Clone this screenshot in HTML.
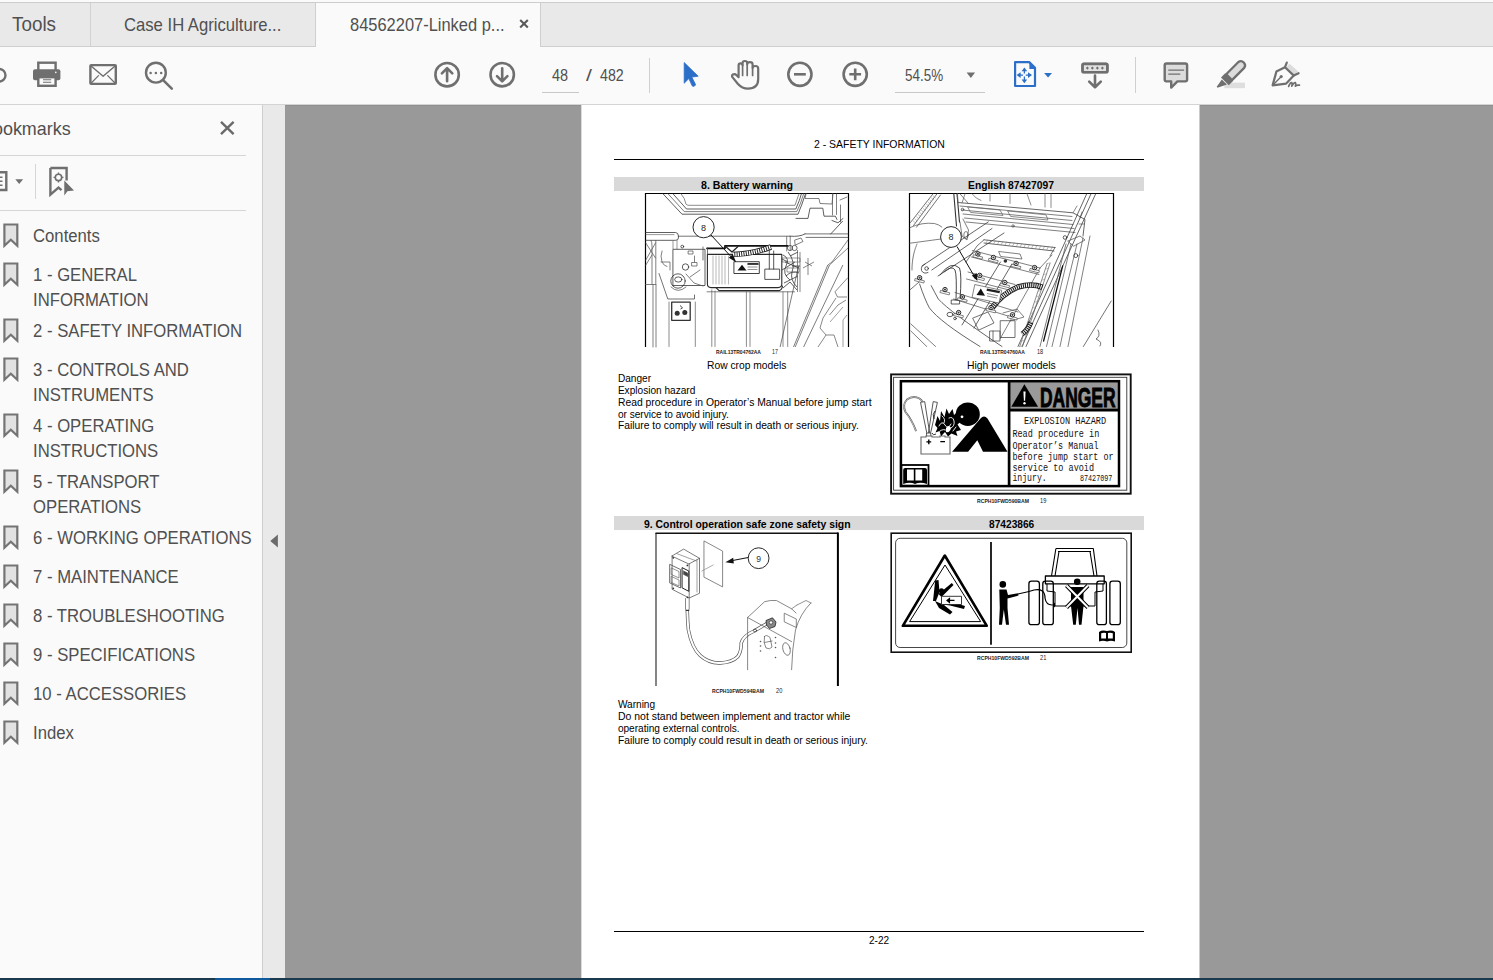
<!DOCTYPE html>
<html><head><meta charset="utf-8">
<style>
*{margin:0;padding:0;box-sizing:border-box}
html,body{width:1493px;height:980px;overflow:hidden}
body{position:relative;background:#999999;font-family:"Liberation Sans",sans-serif}
.a{position:absolute}
.t{position:absolute;white-space:nowrap;line-height:1;font-family:"Liberation Sans",sans-serif}
svg.s{position:absolute;left:0;top:0;overflow:visible}
</style></head><body>
<div class="a" style="left:0px;top:0px;width:1493px;height:2px;background:#fafafa;"></div>
<div class="a" style="left:0px;top:2px;width:1493px;height:1px;background:#cdcdcd;"></div>
<div class="a" style="left:0px;top:3px;width:1493px;height:43px;background:#e9e9e9;"></div>
<div class="a" style="left:0px;top:46px;width:1493px;height:1px;background:#cfcfcf;"></div>
<div class="a" style="left:90px;top:3px;width:1px;height:43px;background:#d2d2d2;"></div>
<div class="a" style="left:315px;top:3px;width:1px;height:44px;background:#cfcfcf;"></div>
<div class="a" style="left:316px;top:3px;width:224px;height:44px;background:#fafafa;"></div>
<div class="a" style="left:540px;top:3px;width:1px;height:44px;background:#cfcfcf;"></div>
<div class="a" style="left:0px;top:47px;width:1493px;height:57px;background:#fafafa;"></div>
<div class="a" style="left:0px;top:104px;width:1493px;height:1px;background:#d4d4d4;"></div>
<div class="a" style="left:0px;top:105px;width:262px;height:873px;background:#fafafa;"></div>
<div class="a" style="left:262px;top:105px;width:1px;height:873px;background:#cfcfcf;"></div>
<div class="a" style="left:263px;top:105px;width:22px;height:873px;background:#e9e9e9;"></div>
<div class="a" style="left:285px;top:105px;width:1208px;height:1px;background:#909090;"></div>
<div class="a" style="left:581px;top:105px;width:1px;height:873px;background:#dcdcdc;"></div>
<div class="a" style="left:582px;top:105px;width:617px;height:873px;background:#ffffff;"></div>
<div class="a" style="left:1199px;top:105px;width:1px;height:873px;background:#cbcbcb;"></div>
<div class="a" style="left:0px;top:978px;width:1493px;height:2px;background:#1b3a4e;"></div>
<div class="a" style="left:215px;top:978px;width:55px;height:2px;background:#0d5a9e;"></div>
<div class="t" style="left:12.30px;top:14.00px;font-size:20px;color:#505050;transform:scaleX(0.9424);transform-origin:0 0;">Tools</div>
<div class="t" style="left:123.80px;top:16.95px;font-size:17.8px;color:#505050;transform:scaleX(0.9365);transform-origin:0 0;">Case IH Agriculture...</div>
<div class="t" style="left:350.30px;top:16.95px;font-size:17.8px;color:#505050;transform:scaleX(0.9249);transform-origin:0 0;">84562207-Linked p...</div>
<div class="t" style="left:551.90px;top:68.17px;font-size:15.8px;color:#505050;transform:scaleX(0.9161);transform-origin:0 0;">48</div>
<div class="t" style="left:585.80px;top:68.17px;font-size:15.8px;color:#505050;transform:scaleX(1.3441);transform-origin:0 0;">/</div>
<div class="t" style="left:600.00px;top:68.17px;font-size:15.8px;color:#505050;transform:scaleX(0.8990);transform-origin:0 0;">482</div>
<div class="a" style="left:542px;top:92px;width:37px;height:1px;background:#c8c8c8;"></div>
<div class="t" style="left:905.40px;top:66.58px;font-size:17px;color:#505050;transform:scaleX(0.7904);transform-origin:0 0;">54.5%</div>
<div class="a" style="left:895px;top:92px;width:90px;height:1px;background:#c8c8c8;"></div>
<div class="a" style="left:649px;top:58px;width:1px;height:35px;background:#d0d0d0;"></div>
<div class="a" style="left:1135px;top:57px;width:1px;height:36px;background:#d0d0d0;"></div>
<div class="t" style="left:-19.42px;top:119.54px;font-size:18.5px;color:#505050;transform:scaleX(0.9686);transform-origin:0 0;">Bookmarks</div>
<div class="a" style="left:0px;top:155px;width:246px;height:1px;background:#d6d6d6;"></div>
<div class="a" style="left:0px;top:210px;width:246px;height:1px;background:#d6d6d6;"></div>
<div class="a" style="left:35px;top:164px;width:1px;height:35px;background:#d6d6d6;"></div>
<div class="t" style="left:33.20px;top:227.17px;font-size:18.3px;color:#505050;transform:scaleX(0.9135);transform-origin:0 0;">Contents</div>
<div class="t" style="left:33.20px;top:266.17px;font-size:18.3px;color:#505050;transform:scaleX(0.9135);transform-origin:0 0;">1 - GENERAL</div>
<div class="t" style="left:33.20px;top:291.17px;font-size:18.3px;color:#505050;transform:scaleX(0.9135);transform-origin:0 0;">INFORMATION</div>
<div class="t" style="left:33.20px;top:322.17px;font-size:18.3px;color:#505050;transform:scaleX(0.9135);transform-origin:0 0;">2 - SAFETY INFORMATION</div>
<div class="t" style="left:33.20px;top:361.17px;font-size:18.3px;color:#505050;transform:scaleX(0.9135);transform-origin:0 0;">3 - CONTROLS AND</div>
<div class="t" style="left:33.20px;top:386.17px;font-size:18.3px;color:#505050;transform:scaleX(0.9135);transform-origin:0 0;">INSTRUMENTS</div>
<div class="t" style="left:33.20px;top:417.17px;font-size:18.3px;color:#505050;transform:scaleX(0.9135);transform-origin:0 0;">4 - OPERATING</div>
<div class="t" style="left:33.20px;top:442.17px;font-size:18.3px;color:#505050;transform:scaleX(0.9135);transform-origin:0 0;">INSTRUCTIONS</div>
<div class="t" style="left:33.20px;top:473.17px;font-size:18.3px;color:#505050;transform:scaleX(0.9135);transform-origin:0 0;">5 - TRANSPORT</div>
<div class="t" style="left:33.20px;top:498.17px;font-size:18.3px;color:#505050;transform:scaleX(0.9135);transform-origin:0 0;">OPERATIONS</div>
<div class="t" style="left:33.20px;top:529.17px;font-size:18.3px;color:#505050;transform:scaleX(0.9135);transform-origin:0 0;">6 - WORKING OPERATIONS</div>
<div class="t" style="left:33.20px;top:568.17px;font-size:18.3px;color:#505050;transform:scaleX(0.9135);transform-origin:0 0;">7 - MAINTENANCE</div>
<div class="t" style="left:33.20px;top:607.17px;font-size:18.3px;color:#505050;transform:scaleX(0.9135);transform-origin:0 0;">8 - TROUBLESHOOTING</div>
<div class="t" style="left:33.20px;top:646.17px;font-size:18.3px;color:#505050;transform:scaleX(0.9135);transform-origin:0 0;">9 - SPECIFICATIONS</div>
<div class="t" style="left:33.20px;top:685.17px;font-size:18.3px;color:#505050;transform:scaleX(0.9135);transform-origin:0 0;">10 - ACCESSORIES</div>
<div class="t" style="left:33.20px;top:724.17px;font-size:18.3px;color:#505050;transform:scaleX(0.9135);transform-origin:0 0;">Index</div>
<svg class="s" width="1493" height="110" viewBox="0 0 1493 110" style="left:0;top:0"><g fill="none" stroke="#6f6f6f" stroke-width="2.4" stroke-linecap="round" stroke-linejoin="round"><circle cx="-0.8" cy="75.2" r="6.3"/><rect x="38.3" y="62.7" width="17.3" height="8.5" stroke-linejoin="miter"/></g><rect x="33" y="69.3" width="27.4" height="10.9" rx="2" fill="#6f6f6f"/><rect x="38.3" y="77.2" width="17.3" height="8.6" fill="#fafafa" stroke="#6f6f6f" stroke-width="2.4"/><path d="M43 79.8h8.2M43 82.2h8.2" stroke="#6f6f6f" stroke-width="1.1"/><circle cx="55.8" cy="72.4" r="0.8" fill="#fafafa"/><g fill="none" stroke="#6f6f6f" stroke-width="2.4" stroke-linecap="round" stroke-linejoin="round"><rect x="90.4" y="65.1" width="25.4" height="18.8" rx="0.8"/><path d="M90.8 65.8L103.1 76.3L115.4 65.8" stroke-width="1.5"/><path d="M91 83.2L98.5 75.6M115.2 83.2L107.7 75.6" stroke-width="1.3"/><circle cx="155.9" cy="72.7" r="9.9"/><path d="M163.4 80.3L171.8 88.6" stroke-width="2.6"/></g><circle cx="150.6" cy="72.9" r="1.25" fill="#6f6f6f"/><circle cx="155.9" cy="72.9" r="1.25" fill="#6f6f6f"/><circle cx="161.2" cy="72.9" r="1.25" fill="#6f6f6f"/><g fill="none" stroke="#6f6f6f" stroke-width="2.6" stroke-linecap="round" stroke-linejoin="round"><circle cx="447.1" cy="74.7" r="11.7"/><path d="M447.1 81.2V68.3M441.9 73.3L447.1 68.1L452.3 73.3"/><circle cx="502.2" cy="74.7" r="11.7"/><path d="M502.2 68.2V81.1M497 76.1L502.2 81.3L507.4 76.1"/><circle cx="799.9" cy="74.3" r="11.6"/><path d="M794 74.3H805.8" stroke-linecap="butt"/><circle cx="855.2" cy="74.3" r="11.6"/><path d="M849.3 74.3H861.1M855.2 68.4V80.2" stroke-linecap="butt"/><path stroke-width="2.2" d="M738.6 76.5V65.3Q738.6 63.3 740.6 63.3Q742.6 63.3 742.6 65.3V63Q742.6 61 744.9 61Q747.2 61 747.2 63V64.2Q747.2 62.2 749.9 62.2Q752.6 62.2 752.6 64.5V68Q752.6 66 755.4 66Q758.2 66 758.2 68.5V79Q758.2 88.6 748 88.6Q742 88.6 738 84L732.6 77.4Q731.3 75.6 732.9 74.5Q734.8 73.4 736.6 75.2L738.6 77.2"/><path stroke-width="1.7" d="M742.6 65.3V75.5M747.2 64.2V75.5M752.6 68V75.5"/><rect x="1082.5" y="63.9" width="24.9" height="8.4" rx="1.3" fill="#e2e2e2"/><rect x="1082.5" y="63.9" width="24.9" height="8.4" rx="1.3" stroke-width="2.1"/><path d="M1095 75.6V86.5M1089.2 81.6L1095 87.2L1100.8 81.6"/></g><path d="M1087.4 66.4L1088.9 68.1L1087.4 69.8L1085.9 68.1Z" fill="#6f6f6f"/><path d="M1092.4 66.4L1093.9 68.1L1092.4 69.8L1090.9 68.1Z" fill="#6f6f6f"/><path d="M1097.4 66.4L1098.9 68.1L1097.4 69.8L1095.9 68.1Z" fill="#6f6f6f"/><path d="M1102.4 66.4L1103.9 68.1L1102.4 69.8L1100.9 68.1Z" fill="#6f6f6f"/><path fill="#2b6fc8" stroke="#2b6fc8" stroke-width="0.8" stroke-linejoin="round" d="M684.2 62.6L698.2 76.2L691.8 77.1L695.4 84.2Q695.8 85.3 694.7 85.8L693.6 86.3Q692.5 86.7 692.1 85.6L688.8 78.6L684.2 83.2Z"/><path d="M1015.1 62.1H1029.2L1035 67.9V86H1015.1Z" fill="none" stroke="#2b6fc8" stroke-width="2.2" stroke-linejoin="round"/><path d="M1029.4 63.2L1034 67.8V69H1029.4Z" fill="#2b6fc8"/><path d="M1024.4 70.5V73.6M1024.4 76.6V80.2M1019.8 75.1H1023M1025.8 75.1H1029" stroke="#2b6fc8" stroke-width="1.3"/><g fill="#2b6fc8"><path d="M1024.4 67.5L1021.6 71.2H1027.2Z"/><path d="M1024.4 83.2L1021.6 79.6H1027.2Z"/><path d="M1016.6 75.1L1020.6 72.3V77.9Z"/><path d="M1032 75.1L1028 72.3V77.9Z"/><path d="M1044.1 73H1052L1048.05 77.5Z"/></g><path fill="#6f6f6f" d="M966.6 72.6H975.1L970.85 78.1Z"/><path fill="#dcdcdc" stroke="#6f6f6f" stroke-width="2.4" stroke-linejoin="round" d="M1166.4 63.5H1185.3Q1187.1 63.5 1187.1 65.3V79.6Q1187.1 81.4 1185.3 81.4H1177.4L1171.2 87.6V81.4H1166.4Q1164.7 81.4 1164.7 79.6V65.3Q1164.7 63.5 1166.4 63.5Z"/><path d="M1168.3 70.2H1184.1M1168.3 74.2H1180.3" stroke="#6f6f6f" stroke-width="1.2"/><rect x="1224.4" y="82.6" width="20.6" height="5.6" fill="#dedede"/><path fill="#dcdcdc" stroke="#6f6f6f" stroke-width="2.3" stroke-linejoin="round" d="M1238.4 62A4.2 4.2 0 0 1 1244.2 67.9L1232 80.1L1226.2 74.2Z"/><path fill="#6f6f6f" d="M1225.2 73.3L1233 81.1L1228.8 85.3L1221 77.5Z"/><path fill="#6f6f6f" d="M1221.8 79.4L1226.9 84.5L1218.2 87.6Q1216.6 87.9 1217.1 86.3Z"/><path fill="#dcdcdc" d="M1289.6 63.8L1298.2 71.6L1294.6 75.2L1285.8 67.4Z"/><g fill="none" stroke="#6f6f6f" stroke-width="2.2" stroke-linejoin="round" stroke-linecap="round"><path d="M1286.8 62.6L1285 67.2L1293.8 75.6L1298.6 73.2"/><path d="M1285 67.2L1276.4 71.6L1272.6 85.4L1286.2 83.6L1293.8 75.6"/><path d="M1273.2 84.8L1280.6 77.2" stroke-width="1.4"/><path d="M1288.6 86.4Q1290.2 82.4 1291.6 82.6Q1292.6 83.2 1291.8 86.2Q1293.8 82.4 1295.2 82.6Q1296.2 83.2 1295.4 86.2Q1296.8 84.6 1299.4 85.2" stroke-width="1.7"/></g><circle cx="1281.2" cy="76.6" r="1.6" fill="#6f6f6f"/><path d="M520.2 20L527.8 27.6M527.8 20L520.2 27.6" stroke="#5a5a5a" stroke-width="2.1"/></svg>
<svg class="s" width="290" height="980" viewBox="0 0 290 980" style="left:0;top:0"><path d="M221 121.8L233.6 134.2M233.6 121.8L221 134.2" stroke="#6a6a6a" stroke-width="2.4"/><path d="M-8 172.2H6.3V190H-8" fill="none" stroke="#6f6f6f" stroke-width="2.4"/><path d="M0 177.2H2.5M0 181.2H2.5M0 185.2H2.5" stroke="#6f6f6f" stroke-width="1.6"/><path d="M15.3 179.2H23.1L19.2 184Z" fill="#6f6f6f"/><path d="M50.4 168H66.6V180.5M50.4 168V194.6L58.5 187.6L61.5 190.2" fill="none" stroke="#6f6f6f" stroke-width="2.4" stroke-linejoin="miter"/><circle cx="58.5" cy="177.4" r="3.2" fill="none" stroke="#6f6f6f" stroke-width="1.6"/><path d="M58.5 172.4V174.2M58.5 180.6V182.4M53.5 177.4H55.3M61.7 177.4H63.5" stroke="#6f6f6f" stroke-width="1.4"/><path d="M64.3 180.6L64.3 195.4L67.4 191.2L74 190.6Z" fill="#6f6f6f"/><path d="M270.3 541L277.9 534.5V547.4Z" fill="#6a6a6a"/><path d="M4.4 224.5H17.3V245.7L10.85 239.7L4.4 245.7Z" fill="#e2e2e2" stroke="#747474" stroke-width="2.2" stroke-linejoin="miter"/><path d="M4.4 263.5H17.3V284.7L10.85 278.7L4.4 284.7Z" fill="#e2e2e2" stroke="#747474" stroke-width="2.2" stroke-linejoin="miter"/><path d="M4.4 319.5H17.3V340.7L10.85 334.7L4.4 340.7Z" fill="#e2e2e2" stroke="#747474" stroke-width="2.2" stroke-linejoin="miter"/><path d="M4.4 358.5H17.3V379.7L10.85 373.7L4.4 379.7Z" fill="#e2e2e2" stroke="#747474" stroke-width="2.2" stroke-linejoin="miter"/><path d="M4.4 414.5H17.3V435.7L10.85 429.7L4.4 435.7Z" fill="#e2e2e2" stroke="#747474" stroke-width="2.2" stroke-linejoin="miter"/><path d="M4.4 470.5H17.3V491.7L10.85 485.7L4.4 491.7Z" fill="#e2e2e2" stroke="#747474" stroke-width="2.2" stroke-linejoin="miter"/><path d="M4.4 526.5H17.3V547.7L10.85 541.7L4.4 547.7Z" fill="#e2e2e2" stroke="#747474" stroke-width="2.2" stroke-linejoin="miter"/><path d="M4.4 565.5H17.3V586.7L10.85 580.7L4.4 586.7Z" fill="#e2e2e2" stroke="#747474" stroke-width="2.2" stroke-linejoin="miter"/><path d="M4.4 604.5H17.3V625.7L10.85 619.7L4.4 625.7Z" fill="#e2e2e2" stroke="#747474" stroke-width="2.2" stroke-linejoin="miter"/><path d="M4.4 643.5H17.3V664.7L10.85 658.7L4.4 664.7Z" fill="#e2e2e2" stroke="#747474" stroke-width="2.2" stroke-linejoin="miter"/><path d="M4.4 682.5H17.3V703.7L10.85 697.7L4.4 703.7Z" fill="#e2e2e2" stroke="#747474" stroke-width="2.2" stroke-linejoin="miter"/><path d="M4.4 721.5H17.3V742.7L10.85 736.7L4.4 742.7Z" fill="#e2e2e2" stroke="#747474" stroke-width="2.2" stroke-linejoin="miter"/></svg>
<div class="t" style="left:813.60px;top:140.08px;font-size:10.1px;color:#000;transform:scaleX(1.0360);transform-origin:0 0;">2 - SAFETY INFORMATION</div>
<div class="a" style="left:614px;top:159px;width:530px;height:1px;background:#000;"></div>
<div class="a" style="left:614px;top:177px;width:530px;height:14px;background:#d9d9d9;"></div>
<div class="t" style="left:700.80px;top:180.68px;font-size:10.1px;color:#000;font-weight:700;transform:scaleX(1.0507);transform-origin:0 0;">8. Battery warning</div>
<div class="t" style="left:968.30px;top:180.68px;font-size:10.1px;color:#000;font-weight:700;transform:scaleX(1.0212);transform-origin:0 0;">English 87427097</div>
<div class="t" style="left:707.20px;top:361.38px;font-size:10.1px;color:#000;transform:scaleX(1.0176);transform-origin:0 0;">Row crop models</div>
<div class="t" style="left:967.10px;top:361.38px;font-size:10.1px;color:#000;transform:scaleX(1.0272);transform-origin:0 0;">High power models</div>
<div class="t" style="left:617.90px;top:374.28px;font-size:10.1px;color:#000;">Danger</div>
<div class="t" style="left:617.90px;top:386.03px;font-size:10.1px;color:#000;">Explosion hazard</div>
<div class="t" style="left:617.90px;top:397.78px;font-size:10.1px;color:#000;transform:scaleX(1.0239);transform-origin:0 0;">Read procedure in Operator’s Manual before jump start</div>
<div class="t" style="left:617.90px;top:409.53px;font-size:10.1px;color:#000;">or service to avoid injury.</div>
<div class="t" style="left:617.90px;top:421.28px;font-size:10.1px;color:#000;transform:scaleX(1.0206);transform-origin:0 0;">Failure to comply will result in death or serious injury.</div>
<div class="a" style="left:614px;top:516px;width:530px;height:14px;background:#d9d9d9;"></div>
<div class="t" style="left:643.70px;top:520.18px;font-size:10.1px;color:#000;font-weight:700;transform:scaleX(1.0317);transform-origin:0 0;">9. Control operation safe zone safety sign</div>
<div class="t" style="left:988.80px;top:519.78px;font-size:10.1px;color:#000;font-weight:700;transform:scaleX(1.0081);transform-origin:0 0;">87423866</div>
<div class="t" style="left:617.90px;top:699.98px;font-size:10.1px;color:#000;">Warning</div>
<div class="t" style="left:617.90px;top:711.93px;font-size:10.1px;color:#000;transform:scaleX(1.0353);transform-origin:0 0;">Do not stand between implement and tractor while</div>
<div class="t" style="left:617.90px;top:723.88px;font-size:10.1px;color:#000;">operating external controls.</div>
<div class="t" style="left:617.90px;top:735.83px;font-size:10.1px;color:#000;transform:scaleX(1.0152);transform-origin:0 0;">Failure to comply could result in death or serious injury.</div>
<div class="a" style="left:614px;top:931px;width:530px;height:1px;background:#000;"></div>
<div class="t" style="left:868.90px;top:935.58px;font-size:10.1px;color:#000;transform:scaleX(0.9943);transform-origin:0 0;">2-22</div>
<div class="t" style="left:715.70px;top:350.30px;font-size:5.6px;color:#222;font-weight:700;transform:scaleX(0.8925);transform-origin:0 0;">RAIL13TR04762AA</div>
<div class="t" style="left:772.00px;top:349.38px;font-size:6.4px;color:#222;transform:scaleX(0.8288);transform-origin:0 0;">17</div>
<div class="t" style="left:980.30px;top:350.30px;font-size:5.6px;color:#222;font-weight:700;transform:scaleX(0.8925);transform-origin:0 0;">RAIL13TR04760AA</div>
<div class="t" style="left:1036.50px;top:349.38px;font-size:6.4px;color:#222;transform:scaleX(0.8709);transform-origin:0 0;">18</div>
<div class="t" style="left:976.70px;top:499.40px;font-size:5.6px;color:#222;font-weight:700;transform:scaleX(0.9132);transform-origin:0 0;">RCPH10FWD590BAM</div>
<div class="t" style="left:1040.00px;top:498.14px;font-size:6.6px;color:#222;transform:scaleX(0.8582);transform-origin:0 0;">19</div>
<div class="t" style="left:711.80px;top:689.40px;font-size:5.6px;color:#222;font-weight:700;transform:scaleX(0.9132);transform-origin:0 0;">RCPH10FWD594BAM</div>
<div class="t" style="left:775.50px;top:688.14px;font-size:6.6px;color:#222;transform:scaleX(0.8582);transform-origin:0 0;">20</div>
<div class="t" style="left:976.70px;top:656.40px;font-size:5.6px;color:#222;font-weight:700;transform:scaleX(0.9132);transform-origin:0 0;">RCPH10FWD592BAM</div>
<div class="t" style="left:1040.00px;top:655.14px;font-size:6.6px;color:#222;transform:scaleX(0.8582);transform-origin:0 0;">21</div>
<svg class="s" width="1493" height="980" viewBox="0 0 1493 980" style="left:0;top:0"><path d="M645.5 347V193.5H848.5V347" fill="none" stroke="#000" stroke-width="1.2"/><path d="M909.5 347V193.5H1113.5V347" fill="none" stroke="#000" stroke-width="1.2"/><path d="M656 686V533" fill="none" stroke="#222" stroke-width="1.1"/><path d="M655.5 533.3H838" fill="none" stroke="#111" stroke-width="1.6"/><path d="M837.9 532.5V686" fill="none" stroke="#000" stroke-width="2"/><g fill="none" stroke="#2a2a2a" stroke-width="0.75" stroke-linejoin="round" stroke-linecap="round"><path d="M663 193.8L682 214.2H798L802 204L805.5 193.8"/><path d="M668 193.8L684.3 211.6H796.8L800.6 203L803.6 193.8" stroke="#555"/><path d="M673 193.8L686.5 209H795.8L799.3 200.5L801.4 193.8"/><path d="M681 193.8L684.2 198.5L686 204.2Q687 205.3 689 205.3H795L797.5 198L799 193.8" stroke="#666"/><path d="M796 218.4H808L810 208.2H822.8L824 216.2H835.4L837 219.5"/><path d="M806 193.8L805 198.5H819L820 203.5L832 204L833 193.8" stroke="#555"/><path d="M832.5 194V215M836.5 194V214.5M840 200L847 197M840.5 205V222" stroke="#555"/><path d="M832 220.5L838 222.8L843 218.5"/><path d="M830.7 234L842.5 221.3"/><path d="M678.5 236.2H790M805 233.9H848M806 237.4H848" stroke="#444"/><path d="M790 236.2Q800 237 805 233.9"/><path d="M786.7 236.5V251M790.2 236.5V250" stroke="#555"/><path d="M795 240L801 238L803 241.5L795.5 245Z" stroke="#555"/><path d="M645.5 232.5H675.5Q678.4 232.7 678.4 236V238Q678.3 240.3 675.6 240.3H645.5"/><path d="M646 234.6H674" stroke="#777"/><path d="M651 240.5Q652 242 652 246V284M655.8 240.5V284M645.8 243L655.5 258M655.5 243L645.8 260M645.8 265L652 255" stroke="#555"/><path d="M673 240.5V248.6M677 240.5V249" stroke="#777"/><path d="M645.5 284.5H655.5M653 284.5V347M656 284.5V347" stroke="#555"/><path d="M673.3 249.3H705V285.5H673.3Z"/><circle cx="685.5" cy="267" r="3.2"/><circle cx="682.3" cy="246.6" r="1.4"/><path d="M688.5 251H693V254H688.5ZM694.5 256V262M692 262.5H697V266H692Z" stroke="#555"/><path d="M662 251Q660 256 662 262Q664 266 667 266.5M661 262H670V270" stroke="#555"/><path d="M659 273.5L667.8 299H694.5V295" stroke="#444"/><circle cx="678" cy="281" r="7.2"/><ellipse cx="678.3" cy="279.5" rx="3.6" ry="2.6"/><path d="M671 287Q678 294 686 287M686 274L694 283L703 286M690 277L700 270" stroke="#555"/><path d="M671.7 302.2H690.2V320.3H671.7Z" stroke="#333" stroke-width="1.3"/></g><circle cx="677.2" cy="313.2" r="2.5" fill="#333"/><circle cx="684.8" cy="312.6" r="2.5" fill="#333"/><path d="M680 305.5L682.5 307.8L680.5 309" stroke="#333" stroke-width="0.9" fill="none"/><g fill="none" stroke="#2a2a2a" stroke-width="0.75" stroke-linejoin="round" stroke-linecap="round"><path d="M669 302V346.5M695.3 302V346.5" stroke="#666"/><path d="M711.8 290V346.5M715 291V346.5M746.4 292V346.5M750 292V346.5M783 292V346.5M787.7 292V346.5" stroke="#666"/><path d="M707 291.8H794.5" stroke="#555"/><path d="M707.4 254.4H781.8V284Q781.8 287.5 778 287.6H711Q707.4 287.4 707.4 284Z" stroke-width="1.1"/><path d="M716 287.6L719 290.6H779Q782 290 782.5 286" stroke-width="1.1"/><path d="M707 248.3H725V245.9H787.7" stroke-width="1.8" stroke="#111"/><path d="M725 246L732 252L738 246.5" stroke-width="1.2" stroke="#222"/><path d="M703 247V260M707.5 248V254" stroke="#444"/><path d="M713 256V284M716 256V284M719 256V284M722 256V284M725 256V284M728.5 256V284" stroke="#888" stroke-width="0.6"/></g><path d="M733 254.5Q752 254 771 247" fill="none" stroke="#1a1a1a" stroke-width="5.6"/><path d="M733 254.5Q752 254 771 247" fill="none" stroke="#fff" stroke-width="4.0" stroke-dasharray="1.4 0.9"/><g fill="none" stroke="#2a2a2a" stroke-width="0.75" stroke-linejoin="round" stroke-linecap="round"><path d="M734.3 261.7H759.3V273.5H734.3Z" stroke-width="0.9"/><path d="M748 264.5H758M748 267H757M748 269.5H757" stroke="#777" stroke-width="0.8"/><path d="M765.2 269.1H779.6V279.4H765.2ZM769.3 251V269M773.7 251V269" stroke-width="0.8"/></g><path d="M737.5 270.5L742 264.8L746.5 270.5Z" fill="#111"/><rect x="747.5" y="263" width="11" height="1.8" fill="#333"/><g fill="none" stroke="#333" stroke-width="0.7"><path d="M783 255Q790 258 786 266Q782 274 790 280M788 252Q796 262 792 272Q790 280 797 287M784 283L798 276M785 262L799 268M782 270L795 262M790 256L798 252M786 276Q792 270 799 273M783 288L790 282L797 290M792 266L800 266M782 259L788 262" stroke="#333" stroke-width="0.8"/><path d="M782 258H800V262H782ZM787 268H799V272H787Z" stroke="#555" stroke-width="0.6"/><path d="M797.5 250V292M800 252V292" stroke="#555"/><circle cx="790" cy="248" r="2.6"/><circle cx="794.5" cy="248" r="2.6"/><path d="M805 262L812 266M808 258V270M803 268L814 262M808 270V275" stroke="#555"/><path d="M798.6 266L780.1 347M827.8 265L793.5 347M829.5 265L795.2 347M842.9 265L803.6 347" stroke="#444"/><path d="M848 240L832 262L827.8 265M848 248L829.5 265" stroke="#555"/><path d="M847.9 277.6L835 291.8L837.5 297H847M836 298L823 318L820 328L826 335H834L838 347M829.5 315L838 305L846 300M826 335L818 347" stroke="#555"/><path d="M843 307L830 322M847 315L843 320V347" stroke="#777"/></g><circle cx="703.6" cy="227.2" r="10.6" fill="#fff" stroke="#111" stroke-width="0.9"/><text x="703.6" y="230.6" font-size="9" text-anchor="middle" font-family="Liberation Sans" fill="#222">8</text><path d="M711 235L733.5 259.3" stroke="#111" stroke-width="1" fill="none"/><path d="M736.2 262.3L728.8 257.8L732.8 254.3Z" fill="#111"/><g fill="none" stroke="#2a2a2a" stroke-width="0.75" stroke-linejoin="round" stroke-linecap="round"><path d="M910.5 222.5L933 193.8M913.5 225.5L937 193.8M916.5 227.2L940.5 195" stroke="#444"/><path d="M913.2 221.0L915.6 223.0" stroke="#888" stroke-width="0.5"/><path d="M914.9 218.9L917.2 220.9" stroke="#888" stroke-width="0.5"/><path d="M916.5 216.8L918.9 218.8" stroke="#888" stroke-width="0.5"/><path d="M918.2 214.7L920.6 216.7" stroke="#888" stroke-width="0.5"/><path d="M919.8 212.6L922.2 214.6" stroke="#888" stroke-width="0.5"/><path d="M921.5 210.5L923.9 212.5" stroke="#888" stroke-width="0.5"/><path d="M923.1 208.4L925.5 210.4" stroke="#888" stroke-width="0.5"/><path d="M924.8 206.3L927.1 208.3" stroke="#888" stroke-width="0.5"/><path d="M926.4 204.2L928.8 206.2" stroke="#888" stroke-width="0.5"/><path d="M928.1 202.1L930.5 204.1" stroke="#888" stroke-width="0.5"/><path d="M929.7 200.0L932.1 202.0" stroke="#888" stroke-width="0.5"/><path d="M931.4 197.9L933.8 199.9" stroke="#888" stroke-width="0.5"/><path d="M933.0 195.8L935.4 197.8" stroke="#888" stroke-width="0.5"/><path d="M910 227.6Q922 222 934.4 223.5Q939 224.5 941.8 227" stroke="#555"/><path d="M910 243.2L941 239" stroke="#555"/><path d="M917 244Q912 256 912 270" stroke="#777" stroke-dasharray="1.2 0.8" stroke-width="1"/><path d="M953.8 193.8L956.5 226M957 193.8L959.5 222" stroke="#333" stroke-width="1.1"/><path d="M960 222L962 236L967 240L968.5 230L963 219" stroke="#555"/><ellipse cx="966" cy="235" rx="2.2" ry="3.5" stroke="#555"/><path d="M958 202.5L1073 212.8L1085 219.5L1083 236" stroke="#333"/><path d="M960 206L1072 216.5M961.5 210L1072 220.5M963 214L1073 224.5M964.5 218L1074 228.5M966 222L1075 232.5" stroke="#555"/><path d="M968 207L1000 210L1003 215.5L971 212.5ZM1008 211L1046 214.8L1048 220L1011 216.5Z" stroke="#666"/><path d="M958 202.5L957.5 193.8M965 193.8L962 203M972 193.8Q976 199 981 200.5M990 193.8V201M1010 193.8V203.5M1027 193.8L1031 205M1045 193.8V207M1051 193.8V207.5" stroke="#666"/><circle cx="962.5" cy="209.5" r="1.3" stroke="#444"/><circle cx="1013" cy="226" r="1.2" stroke="#555"/><path d="M1073 212.8L1077 206M1080 218L1082 212M1079 224H1084" stroke="#666"/><path d="M1086.7 193.8L1018 346.5M1091 193.8L1022 346.5M1095.7 193.8L1026 346.5" stroke="#333"/><path d="M1062.7 265.8L1043.6 341" stroke="#111" stroke-width="1.3"/><path d="M1066 244L1040 346.5M1071 244L1046.5 346.5M1077 244L1052 346.5M1083 238L1060 346.5M1090 236L1068 346.5" stroke="#555"/><path d="M1047.2 263.4L1019.7 346.5M1050 263.4L1022.5 346.5" stroke="#666"/><path d="M1047.5 263.5L1050.3 262.7" stroke="#888" stroke-width="0.5"/><path d="M1045.7 269.0L1048.5 268.2" stroke="#888" stroke-width="0.5"/><path d="M1043.8 274.6L1046.6 273.8" stroke="#888" stroke-width="0.5"/><path d="M1042.0 280.1L1044.8 279.3" stroke="#888" stroke-width="0.5"/><path d="M1040.2 285.6L1043.0 284.8" stroke="#888" stroke-width="0.5"/><path d="M1038.3 291.2L1041.1 290.4" stroke="#888" stroke-width="0.5"/><path d="M1036.5 296.7L1039.3 295.9" stroke="#888" stroke-width="0.5"/><path d="M1034.7 302.2L1037.5 301.4" stroke="#888" stroke-width="0.5"/><path d="M1032.8 307.8L1035.6 307.0" stroke="#888" stroke-width="0.5"/><path d="M1031.0 313.3L1033.8 312.5" stroke="#888" stroke-width="0.5"/><path d="M1029.2 318.8L1032.0 318.0" stroke="#888" stroke-width="0.5"/><path d="M1027.3 324.4L1030.1 323.6" stroke="#888" stroke-width="0.5"/><path d="M1025.5 329.9L1028.3 329.1" stroke="#888" stroke-width="0.5"/><path d="M1023.7 335.4L1026.5 334.6" stroke="#888" stroke-width="0.5"/><path d="M1021.8 341.0L1024.6 340.2" stroke="#888" stroke-width="0.5"/><path d="M1020.0 346.5L1022.8 345.7" stroke="#888" stroke-width="0.5"/><path d="M1111.2 301L1083.4 346.5M1098 330Q1101 336 1096 339Q1103 342 1100 346" stroke="#444"/><circle cx="1065" cy="237.5" r="1.8"/><circle cx="1075.8" cy="255.6" r="2"/><path d="M1068 241L1080 236L1085 240L1074 246Z" stroke="#555"/><path d="M922 266L988.3 221.9M931.8 270L992 228.5M938 276L1004 233" stroke="#333"/><path d="M925 264Q920.5 266 921.5 270.5Q923.5 274.5 928 272.5" /><circle cx="926.6" cy="268.5" r="1.8"/><path d="M960 193.8L968 203" stroke="#555"/><path d="M984 239.8L1055 247.5M984 243L1054 251" stroke="#333"/><path d="M986.0 243.2L987.6 240.0" stroke="#777" stroke-width="0.5"/><path d="M989.8 243.6L991.4 240.4" stroke="#777" stroke-width="0.5"/><path d="M993.6 244.0L995.2 240.8" stroke="#777" stroke-width="0.5"/><path d="M997.4 244.4L999.0 241.2" stroke="#777" stroke-width="0.5"/><path d="M1001.2 244.8L1002.8 241.6" stroke="#777" stroke-width="0.5"/><path d="M1005.0 245.2L1006.6 242.1" stroke="#777" stroke-width="0.5"/><path d="M1008.8 245.7L1010.4 242.5" stroke="#777" stroke-width="0.5"/><path d="M1012.6 246.1L1014.2 242.9" stroke="#777" stroke-width="0.5"/><path d="M1016.4 246.5L1018.0 243.3" stroke="#777" stroke-width="0.5"/><path d="M1020.2 246.9L1021.8 243.7" stroke="#777" stroke-width="0.5"/><path d="M1024.0 247.3L1025.6 244.1" stroke="#777" stroke-width="0.5"/><path d="M1027.8 247.7L1029.4 244.5" stroke="#777" stroke-width="0.5"/><path d="M1031.6 248.1L1033.2 244.9" stroke="#777" stroke-width="0.5"/><path d="M1035.4 248.5L1037.0 245.3" stroke="#777" stroke-width="0.5"/><path d="M1039.2 248.9L1040.8 245.7" stroke="#777" stroke-width="0.5"/><path d="M1043.0 249.3L1044.6 246.2" stroke="#777" stroke-width="0.5"/><path d="M1046.8 249.8L1048.4 246.6" stroke="#777" stroke-width="0.5"/><path d="M1050.6 250.2L1052.2 247.0" stroke="#777" stroke-width="0.5"/><path d="M984 239.8L977 246L966 262M1055 247.5L1050 256" stroke="#444"/><path d="M999 251.5L1020 254L1022 259L1001 256.5Z" stroke="#555"/><path d="M972.5 250.5L1040 268M971.5 257L1039 274.5" stroke="#555"/><path d="M968 272L1015 284.5M966.5 279L1013 291" stroke="#555"/><path d="M955 292.5L1018 312M953.5 299L1016 318.5" stroke="#555"/><path d="M1000.5 262L962 325M1012 264L974 328" stroke="#333"/><path d="M1040 268L1000 339M1052 255L1040 268" stroke="#555"/><path d="M919.6 284Q925 300 929.4 307.9Q940 322 980 346.5M931.2 285.7Q935 293 938.3 299Q950 312 1002 346.5" stroke="#333"/><path d="M910.8 323.9L935.6 346.5M910.8 331L926.7 346.5" stroke="#555"/><path d="M909.8 290L922 279.5" stroke="#444"/><path d="M944.5 271.5Q952 265 955 270Q957 275 956 300M940 275Q951 260 959.5 268Q962 274 960 300" stroke="#333" stroke-width="0.9"/><path d="M951.6 300H959.6V304H951.6Z"/><ellipse cx="950" cy="314.5" rx="3" ry="2.2"/><circle cx="955" cy="318.5" r="1.3"/><path d="M1000.6 320.7H1015V337.5H1000.6Z" stroke="#444"/><path d="M990 331H1000V341H990ZM993 331V341" stroke="#444"/><path d="M973 318L988 312L994 323L979 330Z" stroke="#444"/><path d="M1003 313L1017 309L1024 317L1010 321" stroke="#555"/></g><path d="M992 308Q1003 293 1018 287Q1032 283 1042.4 287.3" fill="none" stroke="#222" stroke-width="5.6"/><path d="M992 308Q1003 293 1018 287Q1032 283 1042.4 287.3" fill="none" stroke="#fff" stroke-width="3.8" stroke-dasharray="1 1.1"/><path d="M1022 334Q1028 330 1031 322" fill="none" stroke="#222" stroke-width="5"/><path d="M1022 334Q1028 330 1031 322" fill="none" stroke="#fff" stroke-width="3.2" stroke-dasharray="1 1.1"/><path d="M973.4 254.7L982.7 257.1L982.1 259.2L972.8 256.8Z" fill="#fff" stroke="#333" stroke-width="0.6"/><circle cx="977.9" cy="253.9" r="2.2" fill="#fff" stroke="#111" stroke-width="0.9"/><circle cx="977.9" cy="253.9" r="1.10" fill="#444"/><path d="M988.9 258.3L998.2 260.7L997.6 262.8L988.3 260.4Z" fill="#fff" stroke="#333" stroke-width="0.6"/><circle cx="993.4" cy="257.5" r="2.2" fill="#fff" stroke="#111" stroke-width="0.9"/><circle cx="993.4" cy="257.5" r="1.10" fill="#444"/><path d="M1011.6 264.2L1020.9 266.6L1020.3 268.7L1011.0 266.3Z" fill="#fff" stroke="#333" stroke-width="0.6"/><circle cx="1016.1" cy="263.4" r="2.2" fill="#fff" stroke="#111" stroke-width="0.9"/><circle cx="1016.1" cy="263.4" r="1.10" fill="#444"/><path d="M1030.1 268.4L1039.4 270.8L1038.8 272.9L1029.5 270.5Z" fill="#fff" stroke="#333" stroke-width="0.6"/><circle cx="1034.6" cy="267.6" r="2.2" fill="#fff" stroke="#111" stroke-width="0.9"/><circle cx="1034.6" cy="267.6" r="1.10" fill="#444"/><path d="M975.2 276.2L984.5 278.6L983.9 280.7L974.6 278.3Z" fill="#fff" stroke="#333" stroke-width="0.6"/><circle cx="979.7" cy="275.4" r="2.2" fill="#fff" stroke="#111" stroke-width="0.9"/><circle cx="979.7" cy="275.4" r="1.10" fill="#444"/><path d="M1000.3 283.3L1009.6 285.7L1009.0 287.8L999.7 285.4Z" fill="#fff" stroke="#333" stroke-width="0.6"/><circle cx="1004.8" cy="282.5" r="2.2" fill="#fff" stroke="#111" stroke-width="0.9"/><circle cx="1004.8" cy="282.5" r="1.10" fill="#444"/><path d="M957.9 297.7L967.2 300.1L966.6 302.2L957.3 299.8Z" fill="#fff" stroke="#333" stroke-width="0.6"/><circle cx="962.4" cy="296.9" r="2.2" fill="#fff" stroke="#111" stroke-width="0.9"/><circle cx="962.4" cy="296.9" r="1.10" fill="#444"/><path d="M940.5 290.4L949.8 292.8L949.2 294.9L939.9 292.5Z" fill="#fff" stroke="#333" stroke-width="0.6"/><circle cx="945" cy="289.6" r="2.2" fill="#fff" stroke="#111" stroke-width="0.9"/><circle cx="945" cy="289.6" r="1.10" fill="#444"/><path d="M986.5 308.4L995.8 310.8L995.2 312.9L985.9 310.5Z" fill="#fff" stroke="#333" stroke-width="0.6"/><circle cx="991" cy="307.6" r="2.2" fill="#fff" stroke="#111" stroke-width="0.9"/><circle cx="991" cy="307.6" r="1.10" fill="#444"/><path d="M1008.0 315.6L1017.3 318.0L1016.7 320.1L1007.4 317.7Z" fill="#fff" stroke="#333" stroke-width="0.6"/><circle cx="1012.5" cy="314.8" r="2.2" fill="#fff" stroke="#111" stroke-width="0.9"/><circle cx="1012.5" cy="314.8" r="1.10" fill="#444"/><path d="M954.1 313.4L963.4 315.8L962.8 317.9L953.5 315.5Z" fill="#fff" stroke="#333" stroke-width="0.6"/><circle cx="958.6" cy="312.6" r="2.2" fill="#fff" stroke="#111" stroke-width="0.9"/><circle cx="958.6" cy="312.6" r="1.10" fill="#444"/><path d="M915.1 278.5L924.4 280.9L923.8 283.0L914.5 280.6Z" fill="#fff" stroke="#333" stroke-width="0.6"/><circle cx="919.6" cy="277.7" r="2.2" fill="#fff" stroke="#111" stroke-width="0.9"/><circle cx="919.6" cy="277.7" r="1.10" fill="#444"/><circle cx="1005.4" cy="261" r="1.8" fill="#333"/><path d="M973.1 287.3H1000.6V300.4H973.1Z" fill="#fff" stroke="#444" stroke-width="0.6" transform="rotate(12 987 294)"/><path d="M976.5 295L980.8 288.6L985 295.8Z" fill="#111"/><path d="M987 288.5L1000 291L999.5 293.2L986.5 290.7Z" fill="#222"/><path d="M987 293.5L998 295.8M987 296L997 298" stroke="#777" stroke-width="0.8"/><circle cx="951" cy="237" r="10.4" fill="#fff" stroke="#111" stroke-width="0.9"/><text x="951" y="240.4" font-size="9" text-anchor="middle" font-family="Liberation Sans" fill="#222">8</text><path d="M957 246.5L975.2 277.8" stroke="#111" stroke-width="1" fill="none"/><path d="M977.4 281L971.8 275.4L976.8 273.2Z" fill="#111"/><rect x="891.1" y="374.4" width="239.6" height="119.3" fill="#fff" stroke="#111" stroke-width="1.9"/><rect x="893.6" y="377.3" width="233.2" height="112.9" fill="none" stroke="#333" stroke-width="0.9"/><rect x="1009" y="381.5" width="110" height="27" fill="#9a9a9a"/><rect x="900.9" y="381.2" width="218.1" height="104.9" fill="none" stroke="#000" stroke-width="2.5"/><path d="M1009.1 381V486" stroke="#000" stroke-width="2.7"/><path d="M1009 410H1119" stroke="#000" stroke-width="3.2"/><path d="M1011.3 406.8L1024.4 384.3L1038.1 406.8Z" fill="#000"/><path d="M1023.4 391.5H1025.6L1025.1 400.8H1023.9Z" fill="#fff"/><circle cx="1024.5" cy="403.3" r="1.2" fill="#fff"/><text x="1040" y="406.6" font-family="Liberation Sans" font-weight="700" font-size="27" textLength="75.6" lengthAdjust="spacingAndGlyphs" fill="#000" stroke="#000" stroke-width="0.9">DANGER</text><text x="1023.9" y="424.4" font-family="Liberation Mono" fill="#111" font-size="11.6" textLength="82.2" lengthAdjust="spacingAndGlyphs">EXPLOSION HAZARD</text><text x="1012.4" y="437.4" font-family="Liberation Mono" fill="#111" font-size="11.6" textLength="86.9" lengthAdjust="spacingAndGlyphs">Read procedure in</text><text x="1012.4" y="448.9" font-family="Liberation Mono" fill="#111" font-size="11.6" textLength="86.3" lengthAdjust="spacingAndGlyphs">Operator’s Manual</text><text x="1012.4" y="460.3" font-family="Liberation Mono" fill="#111" font-size="11.6" textLength="101.2" lengthAdjust="spacingAndGlyphs">before jump start or</text><text x="1012.4" y="471.1" font-family="Liberation Mono" fill="#111" font-size="11.6" textLength="81.7" lengthAdjust="spacingAndGlyphs">service to avoid</text><text x="1012.4" y="481" font-family="Liberation Mono" fill="#111" font-size="11.6" textLength="34.3" lengthAdjust="spacingAndGlyphs">injury.</text><text x="1079.9" y="481.4" font-family="Liberation Mono" fill="#111" font-size="8.2" textLength="32.5" lengthAdjust="spacingAndGlyphs">87427097</text><path d="M916.1 431.1Q912 420 905.5 412Q902 405 907 399.5Q913 395 919.5 398.5Q922 400 922.6 402.5" fill="none" stroke="#555" stroke-width="1.8"/><path d="M916.1 431.1Q912 420 905.5 412Q902 405 907 399.5Q913 395 919.5 398.5Q922 400 922.6 402.5" fill="none" stroke="#fff" stroke-width="0.6"/><path d="M920.5 402.3L924.7 401.6L929.6 432.5L927 434ZM933.2 401.6L937.4 402.4L930.4 434L928.5 432.5Z" fill="#fff" stroke="#444" stroke-width="0.9"/><path d="M926.6 433H930.8V437H926.6Z" fill="#fff" stroke="#444" stroke-width="0.9"/><path d="M921 437H926V436H932V437H940V436H945V437H950V454H921Z" fill="#fff" stroke="#666" stroke-width="1.1"/><path d="M926.4 441.9H931.2M928.8 439.5V444.3M940.3 441.6H945" stroke="#000" stroke-width="1.4"/><path fill="#000" d="M935 425L937.5 416L940 421L941 411L944.5 417L946.5 408.5L949 414L952.5 409L954 415L957.5 411.5L958 418L961.3 421L957.5 424.5L961 430L956 431.5L957.5 436L951.5 433.5L948 436.5L945 432L941 436.3L939.5 431L935.5 432.5L937.5 428Z"/><g fill="none" stroke="#fff" stroke-width="0.9" stroke-linecap="round"><path d="M939 426Q942 420 945 425Q948 430 951 424M942 416Q946 419 944 423M949 418Q953 416 954 421Q955 426 951 428M940 431Q944 428 947 431M953 431L956 427"/></g><path d="M946 428Q949 424 951 428Q950 433 946 432Z" fill="#fff"/><path fill="none" stroke="#000" stroke-width="0.8" d="M934 419Q932 414 935 411M936 434Q933 436 932 433M960 413Q963 410 962 407"/><ellipse cx="967.8" cy="414.2" rx="12" ry="11.8" fill="#000"/><circle cx="962" cy="416.8" r="1.4" fill="#fff"/><path d="M952.1 451.7L980.5 418.5Q984 414.5 987.5 418.5L1007.5 451.7H983L977.3 440.3L968.1 451.7Z" fill="#000"/><rect x="901.5" y="465" width="27" height="20.6" fill="#fff" stroke="#000" stroke-width="1.8"/><path d="M903.2 484V470Q903.2 468 905.2 468H925Q927 468 927 470V484Q920 481.5 915 484Q910 481.5 903.2 484Z" fill="#000"/><path d="M907 469.6H913.8V480.4H907ZM915.4 469.6H922.2V480.4H915.4Z" fill="#fff"/><g fill="none" stroke="#444" stroke-width="0.7" stroke-linejoin="round" stroke-linecap="round"><path d="M672.1 555.9L683.6 549.1L699.5 558.3L689.2 563.8Z"/><path d="M672.1 555.9V589.3L689.2 598V563.8M699.5 558.3V593.3L689.2 598"/><path d="M676.5 553.5L696.4 561M697 559.8V592" stroke="#777"/><path d="M670 564.5L680.5 569.5V588L670 583Z" stroke="#333"/><path d="M671.5 568L679 571.5V578L671.5 574.5ZM671.5 576.5L679 580V586L671.5 582.5Z" stroke="#666"/><path d="M682.4 567.8L688.8 571V591.3L682.4 588Z" stroke="#222" stroke-width="1"/><path d="M683.5 571L687.8 573.2V576.5L683.5 574.3Z" fill="#444"/></g><circle cx="673.3" cy="557.8" r="0.9" fill="#333"/><circle cx="687.4" cy="565.4" r="0.9" fill="#333"/><circle cx="673.3" cy="588.3" r="0.9" fill="#333"/><circle cx="687.4" cy="597.3" r="0.9" fill="#333"/><g fill="none" stroke="#444" stroke-width="0.7" stroke-linejoin="round" stroke-linecap="round"><path d="M704.3 541.1L722.6 551.1V586.9L704.3 577.3Z" stroke="#555"/><path d="M701.9 571L713.1 565" stroke="#888"/><path d="M685.5 598.5V609.5Q687.3 611 689.2 609.5V598.5" stroke="#555"/><path d="M686 610.5H688.8" stroke="#333" stroke-width="1.2"/></g><path d="M687.3 611Q687.6 622 688.4 630Q692 648 700.2 655.6Q709 663.5 720.1 663Q732 662.5 737.7 656.8Q741.5 651 741.2 643Q743 636 754.1 631L767 623.5" fill="none" stroke="#555" stroke-width="3.4"/><path d="M687.3 611Q687.6 622 688.4 630Q692 648 700.2 655.6Q709 663.5 720.1 663Q732 662.5 737.7 656.8Q741.5 651 741.2 643Q743 636 754.1 631L767 623.5" fill="none" stroke="#fff" stroke-width="2.0"/><g fill="none" stroke="#444" stroke-width="0.7" stroke-linejoin="round" stroke-linecap="round"><ellipse cx="755" cy="630.5" rx="1.6" ry="1.4" stroke="#333"/><path d="M747.6 669.7V617.5L764.6 601.7Q770 600 776.4 600.5L791.6 608.8L796 613" stroke="#555"/><path d="M747.6 617.5L791.6 641.6" stroke="#555"/><path d="M810.9 602.9Q800 614 795.5 630Q792 650 791.6 669.7" stroke="#555"/><path d="M797 605L806 600.5L811 603M791.6 608.8L797 605" stroke="#666"/><path d="M784.6 613.4L796.3 619V627.5L784.6 622Z" stroke="#555"/><path d="M764.5 636.5Q766 634 770 637.5L772 647Q770 650 766 648Q763 643 764.5 636.5ZM764.5 642.5L772 641" stroke="#555"/><ellipse cx="786.5" cy="649" rx="3.6" ry="6.4" transform="rotate(-15 786.5 649)" stroke="#555"/></g><g fill="#555"><circle cx="760.5" cy="641.5" r="0.8"/><circle cx="760.5" cy="646" r="0.8"/><circle cx="760.5" cy="651" r="0.8"/><circle cx="775.5" cy="637.5" r="0.8"/><circle cx="775.5" cy="643" r="0.8"/><circle cx="775.5" cy="647.5" r="0.8"/><circle cx="775.5" cy="657.5" r="0.8"/></g><path d="M766 620.5L772.5 617.8L776 622L775 626.5L769.5 628.5L766.5 625Z" fill="#888" stroke="#222" stroke-width="0.8"/><circle cx="771" cy="622.5" r="1.7" fill="#fff" stroke="#222" stroke-width="0.6"/><circle cx="758.6" cy="558.2" r="10.4" fill="#fff" stroke="#111" stroke-width="0.9"/><text x="758.6" y="561.5" font-size="8.6" text-anchor="middle" font-family="Liberation Sans" fill="#333">9</text><path d="M748.2 557.5L730 561" stroke="#111" stroke-width="1" fill="none"/><path d="M725.4 562.2L733.2 557.8L733.8 563.5Z" fill="#111"/><rect x="891.2" y="533.2" width="240" height="119" fill="#fff" stroke="#111" stroke-width="1.6"/><rect x="895.6" y="538.3" width="231.2" height="109.2" rx="4.5" fill="none" stroke="#333" stroke-width="0.9"/><path d="M991 542V644.7" stroke="#000" stroke-width="1.7"/><path d="M944.8 555.5L902.8 625.8H986.8Z" fill="none" stroke="#000" stroke-width="2.6" stroke-linejoin="round"/><path d="M945 565L909.6 621.6H980.7Z" fill="none" stroke="#000" stroke-width="1"/><g fill="#000"><path d="M935.2 580.5L938.5 580L939.5 592L936 601H933Z"/><path d="M938.5 594L951.8 583L953.5 585L941.5 597Z"/><circle cx="941.5" cy="590.8" r="2.6"/><path d="M935 601L939 608L950 614.5L952.5 612L944 605Z"/><path d="M939.5 604L950 601.5L965 606L964 609L950 605.5Z"/></g><path d="M941.5 596.3H961.5V604.5H941.5Z" fill="#fff" stroke="#222" stroke-width="0.9"/><path d="M947 600.4H954.5M947 600.4L949.5 598.4V602.4Z" stroke="#000" stroke-width="1.2" fill="#000"/><g fill="#000"><circle cx="1002.8" cy="584.4" r="3.3"/><path d="M999.3 589.6H1006.5L1008 595L1018 593.3L1018.5 595.5L1007.5 598.5V608L1009 624.8H1006L1003.8 609.5L1002 624.8H999L999.8 608Z"/></g><path d="M1018 594Q1030 591.5 1034 590Q1045 588 1045 598Q1046 605 1052 605" fill="none" stroke="#000" stroke-width="1.2"/><path d="M1052 605L1055 602.5V607.5Z" fill="#000"/><g fill="none" stroke="#000" stroke-width="1.3" stroke-linejoin="round"><path d="M1055.9 548.5H1093.3L1097 576M1055.9 548.5L1051.5 576M1058 551.5H1091M1059 551.5L1055 576M1090 551.5L1094 576" stroke-width="1.1"/><path d="M1045.4 576H1104.2V583.8H1045.4Z"/><path d="M1047 583.8V591L1055 592V606H1095V592L1103 591V583.8" stroke-width="1"/><rect x="1028.9" y="581.2" width="10.5" height="43.5" rx="2.5"/><rect x="1042.8" y="581.2" width="10.5" height="43.5" rx="2.5"/><rect x="1096.8" y="581.2" width="9.6" height="43.5" rx="2.5"/><rect x="1109.9" y="581.2" width="10.4" height="43.5" rx="2.5"/></g><g fill="#000"><circle cx="1077.2" cy="581.8" r="3.3"/><path d="M1071 587H1083.5V606L1081.5 624.8H1079L1077.5 608L1075.8 624.8H1073.2L1071 606Z"/></g><path d="M1066.5 585.5L1088 607.5M1088 585.5L1066.5 607.5" stroke="#000" stroke-width="4"/><path d="M1066.5 585.5L1088 607.5M1088 585.5L1066.5 607.5" stroke="#fff" stroke-width="2"/><path d="M1099 641.5V632Q1102 629.8 1107 631Q1112 629.8 1115 632V641.5Q1111 640 1107 641.5Q1103 640 1099 641.5Z" fill="#000"/><path d="M1101.2 638.6V633.3Q1103.5 632.3 1106 633V638.6ZM1108 638.6V633Q1110.5 632.3 1112.8 633.3V638.6Z" fill="#fff"/></svg>
</body></html>
